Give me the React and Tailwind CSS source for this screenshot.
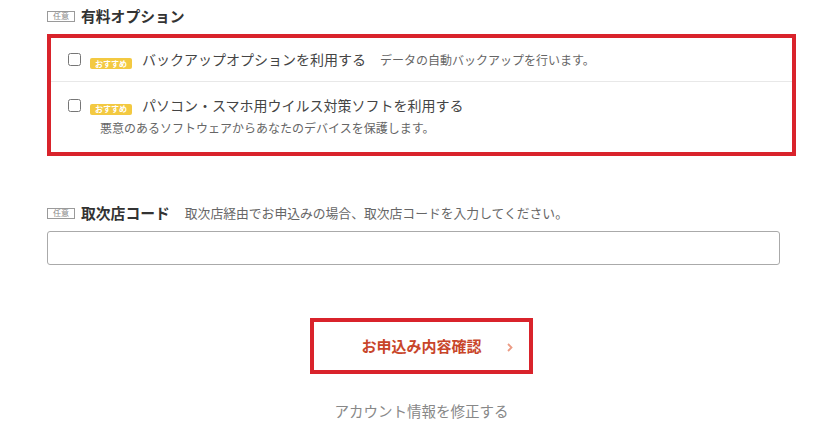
import React, { useState } from "react";

const font = { fontFamily: '"Noto Sans CJK JP", "Noto Sans", sans-serif' };

const OptionalTag = () => (
  <span className="inline-flex h-[11px] w-[28px] items-center justify-center border border-[#9a9a9a] text-[8px] leading-none text-[#888]">
    任意
  </span>
);

const Recommend = () => (
  <span className="inline-flex h-[11px] w-[42px] items-center justify-center rounded-[2px] bg-[#f3c941] text-[8px] font-bold leading-none text-white">
    おすすめ
  </span>
);

const App = () => {
  const [code, setCode] = useState("");
  const [options, setOptions] = useState({ backup: false, virus: false });

  const toggle = (key) => setOptions((prev) => ({ ...prev, [key]: !prev[key] }));

  return (
    <div className="h-[438px] w-[835px] overflow-hidden bg-white text-[#333]" style={font}>
      <div className="pl-[47px] pr-[39px] pt-[6px]">
        {/* 有料オプション */}
        <div className="flex h-[20px] items-center gap-[6px]">
          <OptionalTag />
          <span className="text-[14.8px] font-bold">有料オプション</span>
        </div>
        <div className="mt-[8px] border-4 border-[#d9232b]">
          <label className="flex h-[44px] cursor-pointer items-center border-b border-[#e8e8e8] pl-[17px]">
            <input
              type="checkbox"
              checked={options.backup}
              onChange={() => toggle("backup")}
              className="h-[13px] w-[13px]"
            />
            <span className="ml-[9px]">
              <Recommend />
            </span>
            <span className="ml-[10px] text-[14px] text-[#444]">バックアップオプションを利用する</span>
            <span className="ml-[14px] text-[12px] text-[#666]">データの自動バックアップを行います。</span>
          </label>
          <label className="block cursor-pointer pb-[15px] pl-[17px] pt-[13px]">
            <div className="flex h-[20px] items-center">
              <input
                type="checkbox"
                checked={options.virus}
                onChange={() => toggle("virus")}
                className="h-[13px] w-[13px]"
              />
              <span className="ml-[9px]">
                <Recommend />
              </span>
              <span className="ml-[10px] text-[14px] text-[#444]">
                パソコン・スマホ用ウイルス対策ソフトを利用する
              </span>
            </div>
            <p className="mt-[4px] pl-[32px] text-[12px] leading-[18px] text-[#666]">
              悪意のあるソフトウェアからあなたのデバイスを保護します。
            </p>
          </label>
        </div>

        {/* 取次店コード */}
        <div className="mt-[47px] flex h-[20px] items-center">
          <OptionalTag />
          <span className="ml-[6px] text-[14.8px] font-bold">取次店コード</span>
          <span className="ml-[15px] text-[12.8px] text-[#666]">
            取次店経由でお申込みの場合、取次店コードを入力してください。
          </span>
        </div>
        <input
          type="text"
          value={code}
          onChange={(e) => setCode(e.target.value)}
          className="mt-[8px] block h-[34px] w-[733px] rounded-[3px] border border-[#aaa] px-2 text-[14px] outline-none"
        />

        {/* buttons */}
        <div className="mt-[53px] flex justify-center">
          <button
            type="button"
            className="relative flex h-[56px] w-[223px] items-center justify-center border-4 border-[#d9232b] bg-white"
          >
            <span className="text-[15px] font-bold text-[#c8452a]">お申込み内容確認</span>
            <svg
              className="absolute right-[16px] top-[21px]"
              width="6"
              height="9"
              viewBox="0 0 6 9"
              fill="none"
            >
              <path d="M1 1l3.5 3.5L1 8" stroke="#ec9b84" strokeWidth="1.8" />
            </svg>
          </button>
        </div>
        <div className="mt-[26px] flex justify-center">
          <a href="#" className="text-[14.5px] text-[#888]">アカウント情報を修正する</a>
        </div>
      </div>
    </div>
  );
};

export default App;
